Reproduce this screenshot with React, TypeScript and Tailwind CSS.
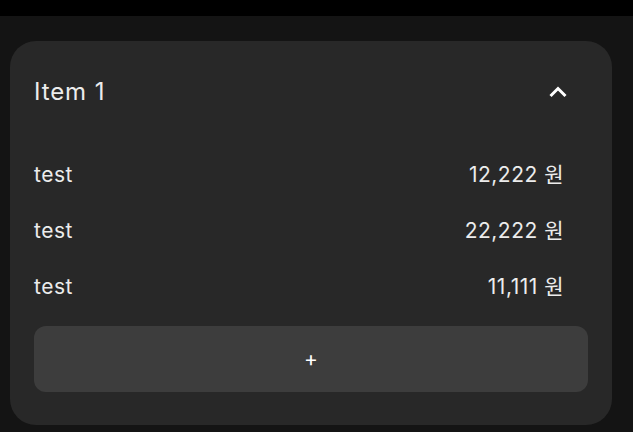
const rows = [
  { name: 'test', amount: '12,222' },
  { name: 'test', amount: '22,222' },
  { name: 'test', amount: '11,111' },
];

export default function App() {
  return (
    <div
      className="w-[633px] h-[432px] bg-[#141414] overflow-hidden text-[#ececec]"
      style={{ fontFamily: 'Inter, "Noto Sans CJK KR", sans-serif' }}
    >
      {/* top bar */}
      <div className="h-[16px] bg-black" />

      {/* Card */}
      <div className="ml-[10px] mt-[25px] w-[602px] rounded-[26px] bg-[#282828] px-[24px] pb-[33px]">
        {/* Header */}
        <div className="h-[102px] flex items-center justify-between">
          <span className="text-[24px] leading-none tracking-[0.9px]">Item 1</span>
          <svg
            width="24"
            height="24"
            viewBox="0 0 24 24"
            className="mr-[18px]"
            fill="none"
            stroke="#ffffff"
            strokeWidth="3"
          >
            <polyline points="4.5,16 12,8.5 19.5,16" />
          </svg>
        </div>

        {/* Rows */}
        <div className="mt-[4px] flex flex-col">
          {rows.map((r, i) => (
            <div
              key={i}
              className="h-[56px] flex items-center justify-between pr-[24px] text-[21px] tracking-[0.5px]"
            >
              <span>{r.name}</span>
              <span>{r.amount} 원</span>
            </div>
          ))}
        </div>

        {/* Add button */}
        <button className="mt-[11px] w-full h-[66px] rounded-[12px] bg-[#3d3d3d] flex items-center justify-center text-[21px] text-white">
          +
        </button>
      </div>
    </div>
  );
}
